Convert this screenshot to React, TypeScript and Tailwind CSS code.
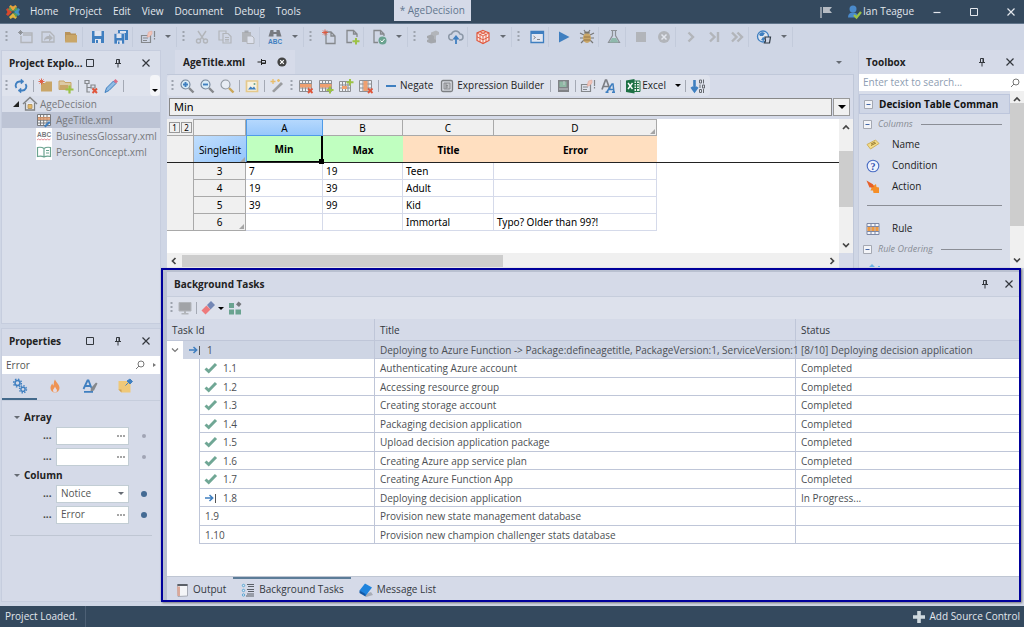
import { useState } from "react";
import type { ReactNode } from "react";
import clsx from "clsx";

const BLUE = "#3f7fc0";
const GRAY = "#85888c";
const LIGHT = "#b2b5ba";
const GREEN = "#6aa390";
const GOLD = "#c9a668";
const LIME = "#9cc245";
const RED = "#e0563b";
const SALMON = "#f0a070";

// All toolbar drawings share a 16x16 box
const ICONS: Record<string, ReactNode> = {
  logo: (
    <>
      <path d="M8 7 4 3 5.500 1 8 2.500 10.500 1 12 3z" fill="#e8a33a" />
      <path d="M9 8l4-4 2 1.500L13.500 8l1.500 2.500-2 1.500z" fill="#3f8fc4" />
      <path d="M8 9l4 4-1.500 2L8 13.500 5.500 15 4 13z" fill="#e2b43c" />
      <path d="M7 8l-4 4-2-1.500L2.500 8 1 5.500 3 4z" fill="#d9482b" />
      <path d="M7.700 7.700 5.500 3 3 5.500zM8.300 8.300 10.500 13 13 10.500zM8.300 7.700 13 5.500 10.500 3z" fill="#57a05a" />
    </>
  ),
  newProject: (
    <>
      <path d="M6 4h9v9.500H4V7M6 6h9" fill="none" stroke={LIGHT} strokeWidth="1.4" />
      <path d="M3.500 1v5M1 3.500h5M2 2l3 3M5 2 2 5" stroke={GRAY} strokeWidth=".8" />
    </>
  ),
  openProject: (
    <>
      <path d="M2 13V3h8l4 4v6z" fill="none" stroke={LIGHT} strokeWidth="1.3" />
      <path d="M4 12c0-3 2-5 5-5V5l4 4-4 3.500V10c-2 0-4 0-5 2z" fill={LIGHT} />
    </>
  ),
  folder: (
    <>
      <path d="M2 3h5l1 1.500h5V6H4l-1 6H2z" fill="#b8935a" />
      <path d="M3 6h11v7.500H2z" fill={GOLD} />
    </>
  ),
  save: (
    <>
      <path d="M2 2h12v12H2z" fill={BLUE} />
      <path d="M4.500 2h7v5h-7zM5 10h6v4H5z" fill="#dfe4ef" />
      <path d="M6 11h2v3H6z" fill={BLUE} />
    </>
  ),
  saveAll: (
    <>
      <path d="M5 1h10v10H5z" fill={BLUE} />
      <path d="M7 2h6v2H7z" fill="#dfe4ef" />
      <path d="M1 4.500h10.500V15H1z" fill={BLUE} stroke="#d0d6e5" strokeWidth=".7" />
      <path d="M3.500 5h5v4h-5zM4 11.500h5V15H4z" fill="#dfe4ef" />
      <path d="M5 12.500h1.500V15H5z" fill={BLUE} />
    </>
  ),
  form: (
    <>
      <path d="M1.500 6.500h9v7h-9zM3 9h5M3 11.500h4" fill="none" stroke={GRAY} strokeWidth="1.2" />
      <path d="m7 8 1.500-5L12 2v3L9 8z" fill="#f0c4b8" stroke="#e0a9a0" strokeWidth=".6" />
      <path d="M14.500 2v6M14.500 9v1.500" stroke={GRAY} strokeWidth="1.2" />
    </>
  ),
  cut: (
    <g fill="none" stroke={LIGHT} strokeWidth="1.4">
      <path d="M4 2l6 9M12 2 6 11" />
      <circle cx="4.500" cy="12" r="2" />
      <circle cx="11.500" cy="12" r="2" />
    </g>
  ),
  copy: (
    <g fill="#d0d6e5" stroke={LIGHT} strokeWidth="1.2">
      <path d="M2 2h7v9H2z" />
      <path d="M6 4.500h5l3 3V14H6zM8 8.500h4M8 10.500h4M8 12h4" />
    </g>
  ),
  paste: (
    <>
      <path d="M2 3h9v10H2z" fill={LIGHT} />
      <path d="M4.500 1.500h4v2h-4z" fill={GRAY} opacity=".6" />
      <path d="M7 7h5l2 2v5.500H7z" fill="#dde1ec" stroke={LIGHT} />
    </>
  ),
  find: (
    <>
      <path d="M3.500 1h3v2h3V1h3l2 6.500H9.500V5h-3v2.500H1.500z" fill="#777a80" />
      <text x="1" y="14.500" fontSize="6.500" fontWeight="700" fill={BLUE} fontFamily="Liberation Sans, sans-serif">ABC</text>
    </>
  ),
  newDoc: (
    <>
      <path d="M5 3h5l4 4v7.500H5z M10 3v4h4" fill="none" stroke={GRAY} strokeWidth="1.3" />
      <path d="M4 .5v6M1 3.500h6M2 1.500l4 4M6 1.500l-4 4" stroke={RED} strokeWidth=".9" />
    </>
  ),
  addDoc: (
    <>
      <path d="M13 8V5L9.500 1.500H3v12h5M9.500 1.500V5H13" fill="none" stroke={GRAY} strokeWidth="1.3" />
      <path d="M12 9v6.500M8.500 12.200h7" stroke={LIME} strokeWidth="2" />
    </>
  ),
  checkDoc: (
    <>
      <path d="M13 7V5L9.500 1.500H3v12h4M9.500 1.500V5H13" fill="none" stroke={GRAY} strokeWidth="1.3" />
      <circle cx="11.500" cy="11.500" r="4" fill={GREEN} />
      <path d="m9.500 11.500 1.500 1.500 2.500-3" fill="none" stroke="#fff" />
    </>
  ),
  scroll: (
    <>
      <path d="M6 3.500 11 1.500 14 3v2.500l-3 1v5L6 13.500z" fill={LIGHT} />
      <path d="M2 7l4-1.500L9 7v3l2 1v2.500l-5 1-4-1.500v-2l2-1-2-1z" fill="#a4a7ac" />
    </>
  ),
  cloud: (
    <>
      <path d="M5 11H4a3 3 0 0 1-.5-6A4.500 4.500 0 0 1 12 5a3 3 0 0 1 0 6h-1" fill="none" stroke="#8b97a6" strokeWidth="1.5" />
      <path d="M8 15V8M5.500 10.500 8 7.500l2.500 3" fill="none" stroke={BLUE} strokeWidth="1.800" />
    </>
  ),
  cube: (
    <>
      <path d="M8 1.500 14 4v7.500L8 14.500l-6-3V4z" fill="#fae9e6" stroke={RED} strokeWidth="1.2" />
      <path d="M2 4l6 3 6-3M8 7v7.500M2 7.800l6 3 6-3M5 2.800l6 2.700V13M11 2.800 5 5.500V13" fill="none" stroke={RED} strokeWidth=".9" />
    </>
  ),
  console: (
    <>
      <path d="M2 2.500h12.500v11H2z" fill="#e2e7f1" stroke={BLUE} strokeWidth="1.3" />
      <path d="M2 2.500h12.500v2.500H2z" fill={BLUE} />
      <path d="M4.500 7l2 1.500-2 1.500M8 10.500h3" fill="none" stroke={GRAY} />
    </>
  ),
  play: <path d="M3 2.500v11L13.500 8z" fill={BLUE} />,
  bug: (
    <>
      <path d="M5 1l2 3M11 1 9 4M1 4l4 2M15 4l-4 2M1 9h4M15 9h-4M2 14l3-3M14 14l-3-3" stroke="#777" strokeWidth="1.2" />
      <ellipse cx="8" cy="9" rx="4" ry="5" fill={GOLD} />
      <path d="M5 4.500a3 2 0 0 1 6 0z" fill="#77736a" />
      <path d="M5 8h6M5 11h6" stroke="#967746" />
    </>
  ),
  flask: (
    <>
      <path d="M5 1.500h6M6.500 1.500v5L2.500 13.500h11L9.500 6.500v-5" fill="none" stroke="#8c9096" strokeWidth="1.2" />
      <path d="M6 9h4l2.500 4.500h-9z" fill="#8fb9ac" />
    </>
  ),
  stop: <path d="M3 3h10v10H3z" fill={LIGHT} />,
  cancel: (
    <>
      <circle cx="8" cy="8" r="6" fill={LIGHT} />
      <path d="m5.500 5.500 5 5M10.500 5.500l-5 5" stroke="#e2e6ee" strokeWidth="1.5" />
    </>
  ),
  step: <path d="m5.500 3.500 4.500 4.500-4.500 4.500" fill="none" stroke={LIGHT} strokeWidth="2.400" />,
  stepOver: <path d="m4 3.500 4.500 4.500L4 12.500M12 3v10" fill="none" stroke={LIGHT} strokeWidth="2.400" />,
  stepAll: <path d="m3 3.500 4.500 4.500L3 12.500M8.500 3.500 13 8l-4.500 4.500" fill="none" stroke={LIGHT} strokeWidth="2.400" />,
  globe: (
    <>
      <circle cx="7" cy="7.500" r="5.500" fill="#dfe6f0" stroke={BLUE} strokeWidth="1.3" />
      <path d="M3 5l3-2 3 1-2 3H4zM7 8l2 1-1 3-3-1z" fill={BLUE} />
      <path d="M9 8h5.500l-1 6H8.500l1-2z" fill="#d0d6e5" stroke="#2f3a46" strokeWidth="1.200" />
    </>
  ),
  refresh: (
    <g fill="none" stroke={BLUE} strokeWidth="1.900">
      <path d="M9 3.500H6.500a4 4 0 0 0-3 6.500M7 12.500h2.500a4 4 0 0 0 3-6.500" />
      <path d="M8 1l3 2.500L8 6zM8 10l-3 2.500L8 15z" fill={BLUE} strokeWidth=".5" />
    </g>
  ),
  newFolder: (
    <>
      <path d="M3 5h4l1-1.500h6v10H3z" fill={GOLD} />
      <path d="M3.500.5v6M.5 3.500h6M1.500 1.500l4 4M5.500 1.500l-4 4" stroke={RED} strokeWidth=".9" />
    </>
  ),
  addFolder: (
    <>
      <path d="M1 3h5l1 1.500h6v7H1z" fill="#dccaa5" stroke={GOLD} />
      <path d="M2 7h8v5H1z" fill={GOLD} />
      <path d="M11.500 7.500v8M7.500 11.500h8" stroke={LIME} strokeWidth="2.2" />
    </>
  ),
  treeX: (
    <>
      <path d="M2 2.500h4v3H2zM4 6v8h3M4 9.500h4M8 7h4v3H8z" fill="none" stroke={GRAY} strokeWidth="1.2" />
      <path d="m9.500 10.500 4.500 4.500M14 10.500 9.500 15" stroke={RED} strokeWidth="2" />
    </>
  ),
  pencil: (
    <>
      <path d="M2 14.500 3.500 10l7-7L13 5.500l-7 7z" fill="#8fbbe4" stroke={BLUE} />
      <path d="m10.500 3 2-2L15 3.500l-2 2z" fill="#dc6f86" />
    </>
  ),
  zoomIn: (
    <>
      <path d="m10 10 4.500 4.500" stroke={GRAY} strokeWidth="2.400" />
      <circle cx="6.500" cy="6.500" r="4.500" fill="#d9ecf7" stroke="#75869a" strokeWidth="1.100" />
      <path d="M6.500 4v5M4 6.500h5" stroke={BLUE} strokeWidth="1.900" />
    </>
  ),
  zoomOut: (
    <>
      <path d="m10 10 4.500 4.500" stroke={GRAY} strokeWidth="2.400" />
      <circle cx="6.500" cy="6.500" r="4.500" fill="#d9ecf7" stroke="#75869a" strokeWidth="1.100" />
      <path d="M4 6.500h5" stroke={BLUE} strokeWidth="1.900" />
    </>
  ),
  zoom: (
    <>
      <path d="m10 10 4.500 4.500" stroke="#caa758" strokeWidth="2.400" />
      <circle cx="6.500" cy="6.500" r="4.500" fill="#e8edf4" stroke="#8f979f" strokeWidth="1.100" />
    </>
  ),
  image: (
    <>
      <path d="M2.500 3h11v10.500h-11z" fill="#f6f2e2" stroke="#e5c98c" strokeWidth="1.700" />
      <path d="m4 11.500 2.500-3 2 1.500 1.500-1.500 2 3z" fill={BLUE} />
      <circle cx="10.500" cy="6" r="1" fill={GREEN} />
    </>
  ),
  wand: (
    <>
      <path d="m3 13 9-9 2 2-9 8.500z" fill="#9a9c9f" />
      <path d="M4 1v5M1.500 3.500h5M8 2.500h3M9.500 1v3" stroke="#e8bd6a" strokeWidth="1.3" />
    </>
  ),
  tableX: (
    <>
      <path d="M1.500 2.500h12v11h-12zM1.500 5.500h12M1.500 10h12M4.500 2.500v11M7.500 2.500v11M10.500 2.500v11" fill="#edf0f5" stroke="#8d8f93" />
      <path d="M2 6h11.500v3.500H2z" fill={SALMON} />
      <path d="m10 10.500 4.500 4.500M14.500 10.500 10 15" stroke={RED} strokeWidth="1.800" />
    </>
  ),
  tableAdd: (
    <>
      <path d="M1.500 2.500h12v11h-12zM1.500 5.500h12M1.500 10h12M4.500 2.500v11M7.500 2.500v11M10.500 2.500v11" fill="#edf0f5" stroke="#8d8f93" />
      <path d="M2 6h11.500v3.500H2z" fill={SALMON} />
      <path d="M12 8.500v7M8.500 12h7" stroke={LIME} strokeWidth="2" />
    </>
  ),
  colAdd: (
    <>
      <path d="M1.500 3.500h11v10h-11zM1.500 7h11M1.500 10h11M4.500 3.500v10M7.500 3.500v10M10 3.500v10" fill="#edf0f5" stroke="#8d8f93" />
      <path d="M4 8h5v3H4z" fill={SALMON} />
      <path d="M12 1v6.500M8.500 4.200h7" stroke={LIME} strokeWidth="2" />
    </>
  ),
  colX: (
    <>
      <path d="M1.500 2.500h12v11h-12zM1.500 6h12M1.500 10h12M5 2.500v11M10 2.500v11" fill="#edf0f5" stroke="#8d8f93" />
      <path d="M5.500 3h4v10h-4z" fill={SALMON} />
      <path d="m10 10.500 4.500 4.500M14.500 10.500 10 15" stroke={RED} strokeWidth="1.800" />
    </>
  ),
  expr: (
    <>
      <rect x="2.500" y="2.500" width="11" height="11" rx="1.500" fill="#d5d8de" stroke="#7c7f83" strokeWidth="1.3" />
      <path d="M5 5h6v6H5zM7 7.500h2M7 9h2M7 5v6" fill="#c3c5c9" stroke="#85878b" strokeWidth=".9" />
    </>
  ),
  panel: (
    <>
      <path d="M3 2h11v12H3z" fill="#808286" />
      <path d="M4.500 3.500h7V9h-7z" fill="#8fb9a4" />
      <path d="M9 3v4M4 11h9" stroke="#c5c8cc" />
    </>
  ),
  font: (
    <>
      <path d="M2 11.500 5.500 2h1L10 11.500M3 8.500h6" fill="none" stroke="#7c7f85" strokeWidth="1.7" />
      <path d="M6.500 14.500 12 6h1l1 8.500M9 11.500h5M5.500 14.300h3M12 14.300h3" fill="none" stroke={BLUE} strokeWidth="1.500" />
    </>
  ),
  excel: (
    <>
      <path d="M8 3h7v10.500H8z" fill="#e8f1ec" stroke="#217346" />
      <path d="M9 5.500h5M9 8h5M9 10.500h5M11.500 3v10" stroke="#217346" />
      <path d="M1 2.500 9.500 1v14.500L1 14z" fill="#1d7044" />
      <path d="m3 5 4.500 6M7.500 5 3 11" stroke="#fff" strokeWidth="1.4" />
    </>
  ),
  sort: (
    <>
      <path d="M4.500 2v11M1.500 9l3 4 3-4" fill="none" stroke={BLUE} strokeWidth="2.600" />
      <path d="M9.500 2h2v3h-2zM13.500 1.500v4M10 6.500V10M12.500 7h2v3h-2zM9.500 11.500h2v3h-2zM13.500 11v4" fill="none" stroke="#666a70" />
    </>
  ),
  monitor: (
    <>
      <path d="M2 2.500h12v8.500H2z" fill="#a1a3a7" stroke={LIGHT} />
      <path d="M7 11h2v2H7zM4.500 13h7v1.500h-7z" fill={LIGHT} />
    </>
  ),
  eraser: (
    <>
      <path d="m7 5 4-4 4 4-4.500 4.500z" fill="#7487b5" />
      <path d="m6.500 5.500 4 4-5 5-4-4z" fill="#ee7a7c" />
    </>
  ),
  tiles: (
    <>
      <path d="M2 3h5v5H2zM2 9.500h5v5H2zM8.500 9.500h5.500v5H8.500z" fill={GREEN} />
      <path d="m11.500 1.500 3 2.500-2.500 3-3-2.500z" fill="#777a7e" />
    </>
  ),
  house: (
    <>
      <path d="M1 8 8 1.500 15 8" fill="none" stroke="#808284" strokeWidth="1.5" />
      <path d="M3.500 7v7h9V7" fill="#eceef2" stroke="#808284" strokeWidth="1.3" />
      <path d="M6 8.500h4v4H6z" fill="#e6b860" stroke="#b79a66" />
    </>
  ),
  fileTable: (
    <>
      <path d="M1.500 2.500h13v11h-13zM1.500 5.500h13M1.500 8.200h13M1.500 11h13M4.500 2.500v11M7.700 2.500v11M11 2.500v11" fill="#f4f4f4" stroke="#77797d" />
      <path d="M2 5h12v3H2z" fill="#dc9464" opacity=".8" />
      <path d="m8 14 5-5 1.500 1.500-5 5z" fill={BLUE} />
    </>
  ),
  fileAbc: (
    <>
      <path d="M0 0h16v16H0z" fill="#fff" />
      <text x="1" y="9" fontSize="6.500" fontWeight="700" fill="#77797d" fontFamily="Liberation Sans, sans-serif">ABC</text>
      <path d="m1 12 1.500-1L4 12l1.500-1L7 12l1.500-1 1.500 1 1.500-1 1.500 1 1.500-1" fill="none" stroke="#e58b93" />
    </>
  ),
  fileBook: (
    <>
      <path d="M0 0h16v16H0z" fill="#fff" />
      <path d="M8 4.500C6 3 4 3 1.500 3.500v9C4 12 6 12 8 13c2-1 4-1 6.500-.5v-9C12 3 10 3 8 4.500zM8 4.500V13M10 6.500h3M10 9h3" fill="none" stroke={GREEN} strokeWidth="1.200" />
    </>
  ),
  gears: (
    <>
      <circle cx="5.500" cy="5" r="2.500" fill="none" stroke={BLUE} strokeWidth="1.500" />
      <circle cx="5.500" cy="5" r="3.900" fill="none" stroke={BLUE} strokeWidth="1.400" strokeDasharray="1.530 1.530" />
      <circle cx="11" cy="11.300" r="2.100" fill="none" stroke={BLUE} strokeWidth="1.400" />
      <circle cx="11" cy="11.300" r="3.500" fill="none" stroke={BLUE} strokeWidth="1.400" strokeDasharray="1.370 1.370" />
    </>
  ),
  flame: (
    <>
      <path d="M8 1.500c1 3 4.500 5 4.500 8.500a4.500 4.500 0 0 1-9 0c0-2 1-3.500 2-4.500 0 1 .5 2 1 2C7 6 6.500 3.500 8 1.500z" fill="#ee9354" />
      <path d="M8 8.500c.5 2 2 2.500 2 4a2 2 0 0 1-4 0c0-1.500 1.500-2 2-4z" fill="#e4dbe2" />
    </>
  ),
  brush: (
    <>
      <path d="M1.500 11 5.500 2.500h1L9.500 10M3 8h5M2 13.800h9" fill="none" stroke={BLUE} strokeWidth="1.800" />
      <path d="M8.500 13.500 9 10l5-5.500 1.500 1-3.500 7z" fill="#85888c" />
    </>
  ),
  note: (
    <>
      <path d="M1.500 3h12v11.500h-9l-3-3z" fill="#efc878" />
      <path d="M1.500 11.500h3v3z" fill="#cda055" />
      <path d="m8.500 7.500 3-3M10 3l3 3 2.500-2.500L13 1z" fill={BLUE} stroke={BLUE} />
    </>
  ),
  check: <path d="m2.500 8.500 3.200 3 7.300-7.500" fill="none" stroke="#70a795" strokeWidth="3" />,
  running: (
    <g fill="none">
      <path d="M2 8h7M6.500 5l3.200 3-3.200 3" stroke={BLUE} strokeWidth="1.500" />
      <path d="M12.500 4v9" stroke="#555" />
    </g>
  ),
  output: (
    <>
      <path d="M3.500 2.500h10V14l-9.500.5z" fill="#f4f5f8" stroke="#a7abb6" />
      <path d="M3.500 2h10v2h-10z" fill="#5b6068" />
      <path d="M3 4.500h3V14H3.500z" fill="#dba99a" />
    </>
  ),
  taskList: (
    <>
      <path d="M7 2.500h7M8 4.500h6M7 7.500h7M8 9.500h6M7 12h7M6 14h8" stroke="#5b6068" />
      <g fill="#d9eef8" stroke="#5ba3d0">
        <circle cx="3.500" cy="3.500" r="1.200" />
        <circle cx="3.500" cy="8.500" r="1.200" />
        <circle cx="3.500" cy="13" r="1.200" />
      </g>
    </>
  ),
  message: (
    <>
      <path d="m6 13 7-3 2 3-7 2z" fill="#a9adb6" />
      <path d="M1.500 8.500 7 1.500l7 4-6.500 8.500z" fill="#1e83dd" />
      <path d="m1.500 8.500 6 3.500v2.500l-6-3.500z" fill="#1259a6" />
    </>
  ),
  tag: (
    <>
      <path d="m2 7.500 8.500-4.500L14 6.500 5.500 12z" fill="#f3dc88" stroke="#cfb05c" />
      <path d="m6 8.500 5-2.500M6 7l4-2" stroke="#8b6d26" strokeWidth=".9" />
    </>
  ),
  question: (
    <>
      <circle cx="8" cy="8" r="5.800" fill="#eef2fc" stroke="#4a6dc4" strokeWidth="1.100" />
      <text x="5.500" y="11.500" fontSize="10" fontWeight="700" fill="#2c4fae" fontFamily="Liberation Serif, serif">?</text>
    </>
  ),
  action: (
    <>
      <path d="M4 5.500 7.500 5 9 6.500l2-1.500.5 3 2.500.5V14H8.500L8 11.500 5.500 11.500 6.500 9z" fill="#f58e27" />
      <path d="M1.500 1.500 7.500 5 9 8 4.500 8.500z" fill="#e6602a" />
    </>
  ),
  rule: (
    <>
      <path d="M2 2.500h12v11H2zM2 5.500h12M2 10.500h12M6 2.500v11M10 2.500v11" fill="#f4f6fb" stroke="#7e88a5" />
      <path d="M2.500 6h3v4h-3zM6.500 6h3v4h-3zM10.500 6h3v4h-3z" fill="#f0993e" />
    </>
  ),
  user: (
    <>
      <circle cx="7" cy="5" r="3.500" fill="#4a8acb" />
      <path d="M2 13.500c0-4 2.500-5 5-5s5 1 5 5z" fill="#4a8acb" />
      <path d="m8 11 2.500 2.500 4.500-5.500" fill="none" stroke={LIME} strokeWidth="2.300" />
    </>
  ),
};

function Icon({ name }: { name: string }) {
  return (
    <svg viewBox="0 0 16 16" className="size-4 shrink-0" aria-hidden="true">
      {ICONS[name]}
    </svg>
  );
}

function Caret({ dark }: { dark?: boolean }) {
  return (
    <svg viewBox="0 0 6 3" className="h-[3px] w-1.5 shrink-0" aria-hidden="true">
      <path d="M0 0h6L3 3z" fill={dark ? "#000" : "#666b73"} />
    </svg>
  );
}

function Grip({ slim }: { slim?: boolean }) {
  return (
    <svg viewBox="0 0 5 12" className={clsx("h-3 shrink-0", slim ? "w-[5px]" : "w-[13px]")} aria-hidden="true">
      <path d="M2.500 0v12" stroke="#9da3ae" strokeWidth="2" strokeDasharray="2 2" />
    </svg>
  );
}

function WinIcon({ kind }: { kind: "max" | "pin" | "close" | "min" }) {
  return (
    <svg viewBox="0 0 10 10" className="size-2.5" fill="none" stroke="currentColor" strokeWidth="1.2" aria-hidden="true">
      {kind === "max" && <path d="M1.500 1.500h7v7h-7z" strokeWidth="1" />}
      {kind === "min" && <path d="M1.500 5.500h7" />}
      {kind === "close" && <path d="m1.500 1.500 7 7M8.500 1.500l-7 7" />}
      {kind === "pin" && <path d="M3.500 1.500h3v4h-3zM6 1.500v4M2 5.500h6M5 6v3.500" strokeWidth="1" />}
    </svg>
  );
}

// "|" separator, "v" caret, ":" grip, anything else is an icon
const MAIN_TOOLS = ": newProject openProject folder | save saveAll | form v s : cut copy paste | find v s : newDoc addDoc | checkDoc v s : scroll cloud | cube v s : console | play bug | flask | stop cancel | step stepOver stepAll | globe v s".split(" ");

function MainToolbar() {
  return (
    <div className="flex h-[25px] items-center overflow-hidden">
      {MAIN_TOOLS.map((t, i) => {
        if (t === ":") return <Grip key={i} />;
        if (t === "|") return <span key={i} className="mr-[3px] h-5 w-px shrink-0 bg-[#c3cbdb]" />;
        if (t === "s") return <span key={i} className="h-5 w-px shrink-0 bg-[#c3cbdb]" />;
        if (t === "v")
          return (
            <button key={i} type="button" aria-label="More" className="flex w-[17px] shrink-0 justify-center">
              <Caret />
            </button>
          );
        return (
          <button key={i} type="button" aria-label={t} className="flex w-[23px] shrink-0 justify-center">
            <Icon name={t} />
          </button>
        );
      })}
    </div>
  );
}

function ToolButton({ name }: { name: string }) {
  return (
    <button type="button" aria-label={name} className="shrink-0">
      <Icon name={name} />
    </button>
  );
}

function Bar() {
  return <span className="h-3 w-px shrink-0 bg-[#a4a9b4]" />;
}

function PanelHeader({ title, max = true, wide }: { title: string; max?: boolean; wide?: boolean }) {
  return (
    <div className="flex h-6 shrink-0 items-center pl-[7px] text-[#33373d]">
      <h2 className="min-w-0 flex-1 text-[10px] font-bold whitespace-nowrap text-[#222]">{title}</h2>
      {max && (
        <button type="button" aria-label="Maximize" className="flex w-7 justify-center">
          <WinIcon kind="max" />
        </button>
      )}
      <button type="button" aria-label="Pin" className="flex w-7 justify-center">
        <WinIcon kind="pin" />
      </button>
      <button type="button" aria-label="Close" className={clsx("flex justify-center", wide ? "w-5" : "w-7")}>
        <WinIcon kind="close" />
      </button>
    </div>
  );
}

const FILES = [
  { name: "AgeTitle.xml", icon: "fileTable" },
  { name: "BusinessGlossary.xml", icon: "fileAbc" },
  { name: "PersonConcept.xml", icon: "fileBook" },
];

function ProjectExplorer() {
  const [active, setActive] = useState("AgeTitle.xml");
  return (
    <section className="flex h-[274px] shrink-0 flex-col border border-[#c6cdde] bg-[#d9deea]">
      <PanelHeader title="Project Explo..." />
      <div className="flex h-[21px] shrink-0 items-center gap-1 bg-[#dfe3ed] pl-0.5">
        <Grip slim />
        <div className="flex flex-1 items-center gap-1">
          <ToolButton name="refresh" />
          <Bar />
          <ToolButton name="newFolder" />
          <ToolButton name="addFolder" />
          <Bar />
          <ToolButton name="treeX" />
          <ToolButton name="pencil" />
          <Bar />
        </div>
        <button type="button" aria-label="Toolbar options" className="flex h-full w-2.5 items-end justify-center rounded-sm bg-[#f4f5f8] pb-1">
          <Caret dark />
        </button>
      </div>
      <div className="flex h-4 items-center gap-0.5 pl-2.5 text-[10px] text-[#77797d]">
        <svg viewBox="0 0 8 8" className="size-2" aria-hidden="true">
          <path d="M7 1v6H1z" fill="#222" />
        </svg>
        <Icon name="house" />
        <span>AgeDecision</span>
      </div>
      <ul>
        {FILES.map((f) => (
          <li key={f.name}>
            <button
              type="button"
              onClick={() => setActive(f.name)}
              className={clsx(
                "flex h-4 w-full items-center gap-1 pl-[34px] text-[10px] text-[#77797d]",
                active === f.name && "bg-[#bdc4d5]"
              )}
            >
              <Icon name={f.icon} />
              {f.name}
            </button>
          </li>
        ))}
      </ul>
    </section>
  );
}

function PropField({ value, strong }: { value: string; strong?: boolean }) {
  return (
    <label className="flex h-[21px] items-center pl-[41px] text-[10px] font-bold text-[#444]">
      <span className="w-[13px]">...</span>
      <span className="flex h-[18px] w-[73px] items-center border border-[#c2cdd4] bg-white pr-0.5">
        <input aria-label="Property value" defaultValue={value} className="w-full min-w-0 flex-1 pl-1 font-normal text-[#555] outline-none" />
        <span className="flex gap-px pr-px">
          <i className="size-0.5 bg-[#a5a5a5]" />
          <i className="size-0.5 bg-[#a5a5a5]" />
          <i className="size-0.5 bg-[#a5a5a5]" />
        </span>
      </span>
      <span className={clsx("rounded-full", strong ? "ml-3 size-1.5 bg-[#446a93]" : "ml-[13px] size-1 bg-[#a1a4b4]")} />
    </label>
  );
}

function PropGroup({ title }: { title: string }) {
  return (
    <h3 className="flex h-4 items-center gap-1 pl-3 text-[10px] font-bold text-[#222]">
      <Caret />
      {title}
    </h3>
  );
}

function Properties() {
  return (
    <section className="flex flex-1 flex-col border border-[#c6cdde] bg-[#d5dae8]">
      <PanelHeader title="Properties" />
      <div className="mt-[3px] flex h-[18px] items-center bg-white pr-1 pl-1">
        <input aria-label="Search properties" defaultValue="Error" className="min-w-0 flex-1 text-[10px] text-[#555] outline-none" />
        <SearchGlyph />
        <span className="ml-2 border-y-2 border-l-[3px] border-y-transparent border-l-[#777]" />
      </div>
      <div className="flex h-[27px] border-b border-[#c6cddc]">
        {["gears", "flame", "brush", "note"].map((n, i) => (
          <button
            key={n}
            type="button"
            aria-label={n}
            className={clsx("flex w-[35px] items-center justify-center border-b-2", i === 0 ? "border-[#446a8c]" : "border-transparent")}
          >
            <Icon name={n} />
          </button>
        ))}
      </div>
      <div className="pt-2">
        <PropGroup title="Array" />
        <PropField value="" />
        <PropField value="" />
        <PropGroup title="Column" />
        <label className="flex h-[21px] items-center pl-[41px] text-[10px] font-bold text-[#444]">
          <span className="w-[13px]">...</span>
          <span className="relative flex h-[18px] w-[73px] items-center border border-[#c2cdd4] bg-white">
            <select aria-label="Column type" className="w-full appearance-none pl-1 font-normal text-[#555] outline-none">
              <option>Notice</option>
            </select>
            <span className="pointer-events-none absolute right-1">
              <Caret />
            </span>
          </span>
          <span className="ml-3 size-1.5 rounded-full bg-[#446a93]" />
        </label>
        <PropField value="Error" strong />
        <hr className="mx-2 mt-2.5 border-[#bfc6d3]" />
      </div>
    </section>
  );
}

function SearchGlyph() {
  return (
    <svg viewBox="0 0 10 10" className="size-2.5 shrink-0" fill="none" stroke="#777" aria-hidden="true">
      <circle cx="6" cy="4" r="3" />
      <path d="M4 6 1 9" />
    </svg>
  );
}

function DocToolbar() {
  return (
    <div className="flex h-[21px] items-center gap-1 self-start rounded-sm bg-[#dfe3ed] pr-1 pl-[3px] text-[10px] text-[#222]">
      <Grip slim />
      <ToolButton name="zoomIn" />
      <ToolButton name="zoomOut" />
      <ToolButton name="zoom" />
      <Bar />
      <ToolButton name="image" />
      <Bar />
      <ToolButton name="wand" />
      <Grip slim />
      <ToolButton name="tableX" />
      <ToolButton name="tableAdd" />
      <ToolButton name="colAdd" />
      <ToolButton name="colX" />
      <Bar />
      <button type="button" className="flex items-center gap-1 pl-[3px]">
        <i className="h-0.5 w-2.5 bg-[#3f7fc0]" />
        Negate
      </button>
      <button type="button" className="flex items-center gap-0.5 px-0.5">
        <Icon name="expr" />
        Expression Builder
      </button>
      <Bar />
      <ToolButton name="panel" />
      <Bar />
      <ToolButton name="form" />
      <ToolButton name="font" />
      <Bar />
      <button type="button" className="flex items-center gap-px">
        <Icon name="excel" />
        Excel
        <span className="ml-2">
          <Caret dark />
        </span>
      </button>
      <Bar />
      <ToolButton name="sort" />
    </div>
  );
}

const ROWS = [
  ["3", "7", "19", "Teen", ""],
  ["4", "19", "39", "Adult", ""],
  ["5", "39", "99", "Kid", ""],
  ["6", "", "", "Immortal", "Typo? Older than 99?!"],
];

function Corner() {
  return (
    <svg viewBox="0 0 5 5" className="absolute right-px bottom-px size-[5px]" aria-hidden="true">
      <path d="M5 0v5H0z" fill="#a5a5a5" />
    </svg>
  );
}

function Sheet() {
  const head = "border-r border-b border-[#a9a9a9] bg-[#f0f0f0] p-0 font-normal";
  return (
    <div className="relative min-w-0 flex-1 overflow-hidden bg-white">
      <table className="w-[490px] table-fixed border-separate border-spacing-0 font-['Noto_Sans',sans-serif] text-[10px] leading-3 text-black">
        <colgroup>
          <col className="w-[27px]" />
          <col className="w-[52px]" />
          <col className="w-[77px]" />
          <col className="w-20" />
          <col className="w-[91px]" />
          <col className="w-[163px]" />
        </colgroup>
        <thead>
          <tr className="h-[17px]">
            <td className="border-r border-b border-[#a9a9a9] bg-[#f0f0f0] p-0">
              <div className="flex gap-px pl-0.5 text-[8px] leading-[9px]">
                <button type="button" className="w-[11px] border border-[#999]">1</button>
                <button type="button" className="w-[11px] border border-[#999]">2</button>
              </div>
            </td>
            <th className={clsx(head, "border-t")} />
            <th className="border border-[#4f9be8] bg-linear-to-b from-[#b5d8fd] to-[#98c8fb] p-0 font-normal">A</th>
            <th className={clsx(head, "border-t")}>B</th>
            <th className={clsx(head, "border-t")}>C</th>
            <th className={clsx(head, "relative border-t")}>
              D
              <Corner />
            </th>
          </tr>
          <tr className="h-[27px]">
            <td className="border-r border-[#a9a9a9] bg-[#f0f0f0] p-0" />
            <th className="relative bg-linear-to-br from-[#c0defd] to-[#94c5fb] p-0 font-normal">
              SingleHit
              <Corner />
            </th>
            <th className="relative border-r-2 border-b-2 border-l border-black border-l-[#4f9be8] bg-[#c0ffc0] p-0">
              Min
              <i className="absolute -right-[3px] -bottom-[3px] z-10 size-[5px] bg-black" />
            </th>
            <th className="bg-[#c0ffc0] p-0">Max</th>
            <th className="bg-[#ffdfc0] p-0">Title</th>
            <th className="bg-[#ffdfc0] p-0">Error</th>
          </tr>
        </thead>
        <tbody>
          {ROWS.map(([no, ...cells]) => (
            <tr key={no} className="h-[17px]">
              <td className={clsx("border-r border-[#a9a9a9] bg-[#f0f0f0] p-0", no === "6" && "border-b")} />
              <th className={clsx(head, "relative")}>
                {no}
                {no === "6" && <Corner />}
              </th>
              {cells.map((c, i) => (
                <td key={i} className="truncate border-r border-b border-[#d5daea] p-0 pl-[3px]">
                  {c}
                </td>
              ))}
            </tr>
          ))}
        </tbody>
      </table>
      {/* frozen header line runs past the last column */}
      <div className="absolute inset-x-0 top-[43px] h-px bg-[#222]" />
    </div>
  );
}

function Chevron({ dir, thin }: { dir: "up" | "down" | "left" | "right"; thin?: boolean }) {
  const d = { up: "M1 6l3-3 3 3", down: "M1 2.500l3 3 3-3", left: "M5.500 1l-3 3 3 3", right: "M2.500 1l3 3-3 3" }[dir];
  return (
    <svg viewBox="0 0 8 8" className="size-2" fill="none" stroke={thin ? "#777" : "#444"} strokeWidth={thin ? 1.2 : 1.7} aria-hidden="true">
      <path d={d} />
    </svg>
  );
}

function Editor() {
  return (
    <section className="flex min-w-0 flex-1 flex-col">
      <div className="flex h-6 items-stretch pl-2">
        <div className="flex items-center gap-2 bg-[#d6dbe9] px-2 text-[10px] font-bold text-[#222]">
          <span className="pr-1">AgeTitle.xml</span>
          <button type="button" aria-label="Pin tab" className="rotate-90">
            <WinIcon kind="pin" />
          </button>
          <button type="button" aria-label="Close tab" className="ml-0.5">
            <svg viewBox="0 0 10 10" className="size-2.5" aria-hidden="true">
              <circle cx="5" cy="5" r="4.600" fill="#444" />
              <path d="m3.200 3.200 3.600 3.600M6.800 3.200 3.200 6.800" stroke="#fff" strokeWidth="1.200" />
            </svg>
          </button>
        </div>
        <button type="button" aria-label="Open documents" className="mr-3 ml-auto">
          <Caret />
        </button>
      </div>
      <div className="flex flex-1 flex-col border-t border-r border-[#c0c8d9] bg-[#d6dbe9]">
        <DocToolbar />
        <div className="mt-0.5 flex h-[18px] gap-px pr-[3px] pl-0.5 text-[10px]">
          <input
            aria-label="Cell value"
            defaultValue="Min"
            className="min-w-0 flex-1 border border-[#888] bg-[#f0f0f0] pl-1 font-['Noto_Sans',sans-serif] text-[11px] outline-none"
          />
          <button type="button" aria-label="Expand" className="flex w-[17px] items-center justify-center border border-[#999] bg-[#f0f0f0]">
            <svg viewBox="0 0 8 4" className="h-1 w-2" aria-hidden="true">
              <path d="M0 0h8L4 4z" />
            </svg>
          </button>
        </div>
        <div className="mt-[3px] flex flex-1">
          <Sheet />
          <div className="flex w-[14px] flex-col items-center justify-between bg-[#f0f0f0] py-1">
            <Chevron dir="up" />
            <i className="mt-5 mb-[34px] w-full flex-1 bg-[#cdcdcd]" />
            <Chevron dir="down" />
          </div>
        </div>
        <div className="mr-[14px] flex h-[15px] items-center bg-[#f0f0f0] px-[3px]">
          <Chevron dir="left" />
          <i className="ml-1 h-3 w-[321px] bg-[#cdcdcd]" />
          <span className="ml-auto">
            <Chevron dir="right" />
          </span>
        </div>
      </div>
    </section>
  );
}

function ToolGroup({ title }: { title: string }) {
  return (
    <h3 className="flex h-5 items-center gap-1.5 pr-2 pl-1 text-[9px] text-[#888c94] italic">
      <BoxMinus />
      {title}
      <i className="ml-0.5 h-px flex-1 bg-[#8b8e96]" />
    </h3>
  );
}

function BoxMinus() {
  return (
    <svg viewBox="0 0 9 9" className="size-[9px] shrink-0" aria-hidden="true">
      <path d="M.5.5h8v8h-8z" fill="#f3f4f8" stroke="#a4a8b2" />
      <path d="M2.500 4.500h4" stroke="#4468a8" />
    </svg>
  );
}

function ToolItem({ icon, label }: { icon: string; label: string }) {
  return (
    <button type="button" className="flex h-[21px] w-full items-center gap-[11px] pl-1.5 text-[10px] text-[#222]">
      <Icon name={icon} />
      {label}
    </button>
  );
}

function Toolbox() {
  return (
    <section className="flex w-[166px] shrink-0 flex-col border-l border-[#c6cdde] bg-[#d5dae8]">
      <PanelHeader title="Toolbox" max={false} />
      <div className="flex h-[17px] items-center bg-white px-1">
        <input aria-label="Search toolbox" placeholder="Enter text to search..." className="min-w-0 flex-1 text-[10px] outline-none placeholder:text-[#8e9db2]" />
        <SearchGlyph />
      </div>
      <div className="flex min-h-0 flex-1">
        <div className="h-[176px] min-w-0 flex-1 overflow-hidden bg-[#d9deea] pt-[3px]">
          <h3 className="flex h-5 items-center gap-1.5 overflow-hidden border border-[#bdc6dc] bg-[#cfd6e6] pl-1 text-[10px] font-bold whitespace-nowrap text-[#111]">
            <BoxMinus />
            Decision Table Comman
          </h3>
          <ToolGroup title="Columns" />
          <ToolItem icon="tag" label="Name" />
          <ToolItem icon="question" label="Condition" />
          <ToolItem icon="action" label="Action" />
          <hr className="mx-2 mt-2 mb-3 border-[#8b8e96]" />
          <ToolItem icon="rule" label="Rule" />
          <ToolGroup title="Rule Ordering" />
          <svg viewBox="0 0 16 16" className="ml-1.5 size-4" aria-hidden="true">
            <path d="m7 5 5 5H2zM13 7h2v4h-2z" fill="#6cb4e6" />
          </svg>
        </div>
        <div className="flex w-[14px] flex-col items-center bg-[#f0f0f0] py-1">
          <Chevron dir="up" />
          <i className="w-full flex-1 bg-[#cdcdcd]" />
          <span className="pt-[30px]">
            <Chevron dir="down" />
          </span>
        </div>
      </div>
    </section>
  );
}

type Task = { id: string; title: string; status: string };

const TASKS: Task[] = [
  { id: "1.1", title: "Authenticating Azure account", status: "Completed" },
  { id: "1.2", title: "Accessing resource group", status: "Completed" },
  { id: "1.3", title: "Creating storage account", status: "Completed" },
  { id: "1.4", title: "Packaging decision application", status: "Completed" },
  { id: "1.5", title: "Upload decision application package", status: "Completed" },
  { id: "1.6", title: "Creating Azure app service plan", status: "Completed" },
  { id: "1.7", title: "Creating Azure Function App", status: "Completed" },
  { id: "1.8", title: "Deploying decision application", status: "In Progress..." },
  { id: "1.9", title: "Provision new state management database", status: "" },
  { id: "1.10", title: "Provision new champion challenger stats database", status: "" },
];

function TaskTable() {
  const [open, setOpen] = useState(true);
  const cell = "whitespace-nowrap border-b border-l border-[#bfc6d8] p-0 pl-[5px]";
  return (
    <table className="w-full table-fixed border-separate border-spacing-0 text-left text-[10px] leading-4 text-[#4c4f54]">
      <colgroup>
        <col className="w-[207px]" />
        <col className="w-[421px]" />
        <col />
      </colgroup>
      <thead>
        <tr className="h-[22px] bg-[#d5dae8] text-[#33373d]">
          <th className="border-b border-[#bfc6d8] p-0 pl-[5px] font-normal">Task Id</th>
          <th className={clsx(cell, "font-normal")}>Title</th>
          <th className={clsx(cell, "font-normal")}>Status</th>
        </tr>
      </thead>
      <tbody>
        <tr className="h-[18px] bg-[#ced5e4]">
          <td className="p-0">
            <div className="flex h-[18px] items-center">
              <button
                type="button"
                aria-label="Toggle subtasks"
                onClick={() => setOpen(!open)}
                className="mr-1 flex h-full w-4 items-center justify-center bg-white"
              >
                <Chevron dir={open ? "down" : "right"} thin />
              </button>
              <Icon name="running" />
              <span className="pl-1">1</span>
            </div>
          </td>
          <td className={cell}>
            Deploying to Azure Function -&gt; Package:defineagetitle, PackageVersion:1, ServiceVersion:1
          </td>
          <td className={cell}>[8/10] Deploying decision application</td>
        </tr>
        {open &&
          TASKS.map((t) => (
            <tr key={t.id} className="h-[18px] even:h-[19px]">
              <td className="h-[inherit] p-0 pl-8">
                <div className="flex h-[inherit] items-center gap-1 border-b border-l border-[#bfc6d8] pl-[3px]">
                  {t.status === "Completed" && <Icon name="check" />}
                  {t.status === "In Progress..." && <Icon name="running" />}
                  <span className={clsx(!t.status && "pl-0.5")}>{t.id}</span>
                </div>
              </td>
              <td className={cell}>{t.title}</td>
              <td className={cell}>{t.status}</td>
            </tr>
          ))}
      </tbody>
    </table>
  );
}

const TABS = [
  { label: "Output", icon: "output" },
  { label: "Background Tasks", icon: "taskList" },
  { label: "Message List", icon: "message" },
];

function BackgroundTasks() {
  const [tab, setTab] = useState("Background Tasks");
  return (
    <section className="mr-[3px] flex flex-1 flex-col border-2 border-[#00009b] bg-[#b9c0d0] pt-0.5 pl-1 shadow-[1px_1px_2px_#777]">
      <div className="flex flex-1 flex-col bg-white">
        <div className="bg-[#d5dae8]">
          <PanelHeader title="Background Tasks" max={false} wide />
        </div>
        <div className="flex h-[23px] items-center gap-[3px] border-t border-[#c6cddc] bg-[#dde1ec] pl-0.5">
          <Grip slim />
          <ToolButton name="monitor" />
          <Bar />
          <button type="button" aria-label="Clear" className="flex items-center gap-0.5">
            <Icon name="eraser" />
            <Caret dark />
          </button>
          <ToolButton name="tiles" />
        </div>
        <TaskTable />
        <div className="mt-auto flex h-6 border-t border-[#bfc6d3] bg-[#d5dae8] text-[10px] text-[#33373d]">
          {TABS.map((t) => (
            <button
              key={t.label}
              type="button"
              onClick={() => setTab(t.label)}
              className={clsx(
                "flex items-center gap-[3px] border-t-2 px-[7px]",
                tab === t.label ? "border-[#5c7c98]" : "border-transparent"
              )}
            >
              <Icon name={t.icon} />
              {t.label}
            </button>
          ))}
        </div>
      </div>
    </section>
  );
}

const MENUS = ["Home", "Project", "Edit", "View", "Document", "Debug", "Tools"];

export default function App() {
  return (
    <div className="flex min-h-screen flex-col bg-[#cfd6e5] font-['Open_Sans',sans-serif]">
      <header className="flex h-6 items-center border-b border-[#60748a] bg-[#34495e] pr-2 pl-[5px] text-[10px] text-[#e3e7ed]">
        <Icon name="logo" />
        <nav className="flex gap-[11px] pl-[9px]">
          {MENUS.map((m) => (
            <button key={m} type="button">
              {m}
            </button>
          ))}
        </nav>
        <div className="ml-[93px] flex h-full items-start">
          <span className="flex h-[21px] items-center bg-[#d5dae8] px-1.5 text-[#62768e]">* AgeDecision</span>
        </div>
        <div className="ml-auto flex items-center">
          <svg viewBox="0 0 12 12" className="size-3" aria-hidden="true">
            <path d="M1 1v11" stroke="#b6bcc4" strokeWidth="1.400" />
            <path d="M3 1h9L9.500 4l2.500 3H3z" fill="#b6bcc4" />
          </svg>
          <button type="button" className="ml-3.5 flex items-center gap-px">
            <Icon name="user" />
            Ian Teague
          </button>
          <button type="button" aria-label="Minimize" className="ml-[18px]">
            <WinIcon kind="min" />
          </button>
          <button type="button" aria-label="Restore" className="ml-[27px]">
            <WinIcon kind="max" />
          </button>
          <button type="button" aria-label="Close" className="ml-[27px]">
            <WinIcon kind="close" />
          </button>
        </div>
      </header>
      <MainToolbar />
      <main className="flex flex-1 pt-px pb-1">
        <aside className="flex w-[161px] shrink-0 flex-col gap-1 pl-px">
          <ProjectExplorer />
          <Properties />
        </aside>
        <div className="flex min-w-0 flex-1 flex-col">
          <div className="flex h-[218px] shrink-0 gap-1 pl-1.5">
            <Editor />
            <Toolbox />
          </div>
          <BackgroundTasks />
        </div>
      </main>
      <footer className="flex h-[21px] items-center bg-[#34495e] text-[10px] text-[#e3e7ed]">
        <span className="flex h-full items-center border-r border-[#4d6075] px-[5px] pr-2">Project Loaded.</span>
        <button type="button" className="ml-auto flex items-center gap-1 pr-1">
          <svg viewBox="0 0 10 10" className="size-3" aria-hidden="true">
            <path d="M5 0v10M0 5h10" stroke="#cfd9df" strokeWidth="3" />
          </svg>
          Add Source Control
        </button>
      </footer>
    </div>
  );
}
